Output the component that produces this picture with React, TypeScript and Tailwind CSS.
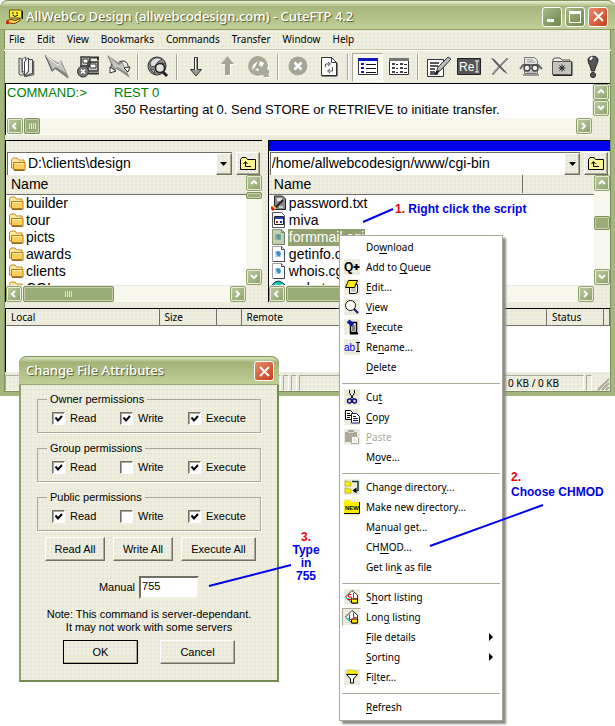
import React, { useState } from 'react';
import clsx from 'clsx';

const FACE = 'bg-[#eeeedb] bg-[radial-gradient(#e4e4e2_1px,transparent_1px)] bg-[size:4px_4px]';
const RAISED = 'border border-t-white border-l-white border-r-[#716f64] border-b-[#716f64] shadow-[inset_-1px_-1px_0_#aca899]';
const SUNKEN = 'border border-t-[#aca899] border-l-[#aca899] border-r-white border-b-white';
const UI_TEXT = "font-['Noto_Sans',sans-serif] text-[10px] text-black";

interface ToolItem {
  label: string;
  icon: React.ReactNode;
  pressed?: boolean;
  disabled?: boolean;
}

interface MenuEntry {
  label: string;
  hot?: number;
  icon?: React.ReactNode;
  disabled?: boolean;
  checked?: boolean;
  submenu?: boolean;
}

/* ---------- icons ---------- */

const Svg = ({ w = 24, h = 24, children }: { w?: number; h?: number; children: React.ReactNode }) => (
  <svg width={w} height={h} viewBox={`0 0 ${w} ${h}`} fill="none" aria-hidden="true" className="shrink-0">
    {children}
  </svg>
);

const FolderIcon = () => (
  <Svg w={16} h={16}>
    <path d="M1.500 12V3.500L3 2h4l1.500 2H14v8z" fill="#fbe9a0" stroke="#c8891c" />
    <path d="M3.500 13.500V6.500h11.500v6L14 13.500z" fill="#fbcf5c" stroke="#b97a12" />
    <path d="M4.500 7.500h9.500" stroke="#fff3bd" />
    <path d="M4 14.500h10.500l1-1.500" stroke="#8a6a2a" />
  </Svg>
);

const UpFolderIcon = () => (
  <Svg w={16} h={14}>
    <path d="M.5 12.500V2.500L2 .5h4l1.500 2h8v10z" fill="#fbf58e" stroke="#000" />
    <path d="M5.500 5v4.500H11M3.500 7l2-2.500 2 2.500" stroke="#000" />
  </Svg>
);

const PasswordFile = () => (
  <Svg w={16} h={16}>
    <path d="M3.500 1h8l3 3v10.500h-11z" fill="#8c8c8c" stroke="#222" />
    <path d="M6 3h5v3H6z" fill="#e4e4e4" />
    <path d="M4 13l8-8" stroke="#222" strokeWidth="2" />
    <path d="M8 11h4v2H8z" fill="#ccc" />
    <path d="M0 12l3 3" stroke="#d01818" strokeWidth="3" />
    <path d="M2 11l3 3" stroke="#f0c020" strokeWidth="2" />
  </Svg>
);

const MivaFile = () => (
  <Svg w={16} h={16}>
    <path d="M1.500.5h9l3 3v12h-12z" fill="#fff" stroke="#555" />
    <path d="M3.500 4.500h9v8h-9z" fill="#fff" stroke="#222" />
    <path d="M4 5h8v2H4z" fill="#2a3cc0" />
    <path d="M5 9h2v2H5z" fill="#c02020" />
    <path d="M9 9h2v2H9z" fill="#2030b0" />
  </Svg>
);

const ScriptFile = ({ selected }: { selected?: boolean }) => (
  <Svg w={16} h={16}>
    <path d="M1.500.5h9l3 3v12h-12z" fill={selected ? '#c3d0b0' : '#fff'} stroke={selected ? '#8b9a74' : '#9aa0a8'} />
    <path d="M13.500 4v11.500h-11M10.500.5v3h3" stroke={selected ? '#6c7c56' : '#3c4450'} />
    <path d="M4 5h6v6H4z" fill={selected ? '#86b59a' : '#b9dcf2'} />
    <path d="M5 6l3-1 2 3-2 3-2-2z" fill={selected ? '#5f96a0' : '#2f8fd0'} />
  </Svg>
);

const GemFile = () => (
  <Svg w={16} h={16}>
    <path d="M1 5l3-3 4-1 4 2 3 3-7 8z" fill="#18b8b0" stroke="#0b3c48" />
    <path d="M4 4l4 2 4-2" stroke="#7ff" />
  </Svg>
);

const CrossGlyph = () => (
  <Svg w={13} h={13}>
    <path d="M2 2l9 9M11 2l-9 9" stroke="#fff" strokeWidth="2" />
  </Svg>
);

const AppLogo = () => (
  <Svg w={18} h={16}>
    <path d="M3.500 1h12v8h-12z" fill="#ffee38" stroke="#6b5300" />
    <path d="M16.500 2v8" stroke="#111" />
    <path d="M7 3v2M11 3v2M6.500 6l2.500 1.500L12 6" stroke="#111" />
    <path d="M1 11.500l4-1 4 1 5-2v2l-5 3-7-.5z" fill="#ffd83a" stroke="#6b3b00" />
    <path d="M0 12h3v3H0z" fill="#d42a10" />
  </Svg>
);

const BookIcon = () => (
  <Svg>
    <path d="M5 3l3 1v13l3 3H6l-1-1z" fill="#d8d8d2" stroke="#555" />
    <path d="M8.500 4l3-2v14l-3 1z" fill="#fff" stroke="#666" />
    <path d="M10.500 7l3-4h1v13l-4 5z" fill="#fff" stroke="#444" />
    <path d="M14.500 4.500h4v14l-4 1-4 2 4-5z" fill="#e8e8e2" stroke="#444" />
    <path d="M19.500 6v13.500l-8 2" stroke="#666" strokeWidth="1.500" />
  </Svg>
);

const BoltIcon = () => (
  <Svg>
    <path d="M0 0l13 8 3-3 8 18-14-9-3 3z" fill="#8a8a82" />
    <path d="M2 2l11 8 3-3 5 11-10-6-3 3z" fill="#c4c4bc" />
    <path d="M0 0l7 16 3-3 13 10" stroke="#666" />
    <path d="M1 1l12 9 3-4" stroke="#fff" />
  </Svg>
);

const StopConnectIcon = () => (
  <Svg>
    <path d="M5 2h9v9H5zM12 7h10v9H12z" fill="#c9c9c2" stroke="#333" strokeWidth="1.500" />
    <path d="M7 4h5v4H7zM14 9h6v4h-6z" fill="#fff" stroke="#333" />
    <path d="M12 18.500h11M15 2.500h7v3" stroke="#333" strokeWidth="2" />
    <circle cx="7" cy="16.500" r="5.500" fill="#777" stroke="#333" />
    <path d="M5 14.500l4 4M9 14.500l-4 4" stroke="#fff" strokeWidth="1.500" />
  </Svg>
);

const ReconnectIcon = () => (
  <Svg>
    <path d="M0 0l12 8 3-2 8 17-13-9-3 2z" fill="#8a8a82" />
    <path d="M2 2l10 8 3-2 5 10-10-6-2 2z" fill="#c4c4bc" />
    <path d="M12 7c6-3 10 1 9 7M5 9c-2 2-1 6 3 8" stroke="#333" />
    <path d="M23 12l-2 5-4-4zM3 18v-6l6 4z" fill="#fff" stroke="#333" />
  </Svg>
);

const GlobeFindIcon = () => (
  <Svg>
    <circle cx="11" cy="11" r="9" fill="#8a8a86" stroke="#333" />
    <path d="M4 8c3-6 8-6 12-4l-4 3-3 4-4 1zM4 14l4 1 1 4zM15 8l4 1v4z" fill="#ddd" stroke="#444" />
    <circle cx="14" cy="13" r="4.500" fill="#fff" fillOpacity=".75" stroke="#222" strokeWidth="1.500" />
    <path d="M17 17l4 4" stroke="#222" strokeWidth="3" />
  </Svg>
);

const DownIcon = () => (
  <Svg>
    <path d="M9.500 2.500h3v12h4l-5.500 6.500-5.500-6.500h4z" fill="#999" stroke="#333" />
    <path d="M10.500 3v12" stroke="#fff" />
  </Svg>
);

const UpIcon = () => (
  <Svg>
    <path d="M10 21h5V10h4l-6.500-8L6 10h4z" fill="#fff" />
    <path d="M9 20h5V9h4l-6.500-8L5 9h4z" fill="#a5a595" />
  </Svg>
);

const QueueIcon = () => (
  <Svg w={26}>
    <circle cx="13" cy="12" r="10" fill="#fff" />
    <circle cx="12" cy="11" r="10" fill="#a9a99a" />
    <path d="M14 15h9v7h-5z" fill="#a9a99a" />
    <path d="M6 15l1-5 5-4-3 6zM14 6l4 2-2 4-3-2zM9 15l3-2 1 3z" fill="#fff" />
    <path d="M19 22.500h5M22 20l2-2" stroke="#fff" />
  </Svg>
);

const AbortIcon = () => (
  <Svg>
    <circle cx="13" cy="12" r="9" fill="#fff" />
    <circle cx="12" cy="11" r="9.500" fill="#a5a595" />
    <path d="M8.500 7.500l7 7M15.500 7.500l-7 7" stroke="#fff" strokeWidth="2.500" />
  </Svg>
);

const RefreshPageIcon = () => (
  <Svg>
    <path d="M4.500 2.500h10l5 5v13h-15z" fill="#fff" stroke="#333" />
    <path d="M20 8v13H5" stroke="#222" />
    <path d="M14.500 2.500v5h5" stroke="#333" />
    <path d="M8.500 12V9h4M11 7l2.500 2L11 11M15.500 12v4h-4M13 14l-2.500 2 2.500 2" stroke="#555" />
  </Svg>
);

const ListViewIcon = ({ blue }: { blue?: boolean }) => (
  <Svg w={22}>
    <path d="M1.500 4h19v15.500h-19z" fill="#fff" stroke="#333" />
    <path d="M1 3h20v3H1z" fill={blue ? '#1018b8' : '#777'} />
    {[9, 13, 17].map((y) => (
      <g key={y}>
        <path d={`M4 ${y}h3`} stroke={blue ? '#1018b8' : '#444'} strokeWidth="2" />
        {blue ? (
          <path d={`M9 ${y + 0.5}h10`} stroke="#111" />
        ) : (
          <>
            <path d={`M8 ${y + 0.5}h2M16 ${y + 0.5}h3`} stroke="#222" />
            <path d={`M12 ${y}h3`} stroke="#444" strokeWidth="2" />
          </>
        )}
      </g>
    ))}
  </Svg>
);

const EditIcon = () => (
  <Svg w={26}>
    <path d="M2.500 4.500h16v17h-16z" fill="#fff" stroke="#333" />
    <path d="M5 8h9M5 11h8M5 14h5M5 17h5M5 19h8" stroke="#222" strokeWidth="1.500" />
    <path d="M11 18l2-6L23 2l3 2-10 11z" fill="#bbb" stroke="#333" />
    <path d="M10 19l4-3" stroke="#111" strokeWidth="2" />
  </Svg>
);

const RenameTool = () => (
  <svg width="24" height="18" viewBox="0 0 24 18" aria-hidden="true">
    <path d="M.5.5h23v16H.5z" fill="#555" stroke="#222" />
    <text x="2" y="13" fontSize="12" fill="#fff" fontFamily="Liberation Sans, sans-serif">Re</text>
    <path d="M18 3h4M18 14h4M20 3v11" stroke="#fff" />
  </svg>
);

const DeleteIcon = () => (
  <Svg>
    <path d="M20 4l-8 8-7 8-1-1 7-8 8-8z" fill="#999" stroke="#555" strokeWidth=".5" />
    <path d="M3 3l3 1 14 15-4-2L8 9z" fill="#555" />
  </Svg>
);

const InspectIcon = () => (
  <Svg w={26}>
    <path d="M6.500 2.500h10l3 3v13h-13z" fill="#e4e4e0" stroke="#777" />
    <path d="M9 5h6M9 7h8M8 17h10" stroke="#999" />
    <path d="M2 14l3-4h15l4 4" stroke="#666" strokeWidth="2" />
    <circle cx="9" cy="13" r="3" fill="#eee" stroke="#444" strokeWidth="1.500" />
    <circle cx="17" cy="13" r="3" fill="#eee" stroke="#444" strokeWidth="1.500" />
    <path d="M5 20h16" stroke="#999" strokeWidth="2" />
  </Svg>
);

const NewFolderTool = () => (
  <Svg>
    <path d="M3 7V4l2-1h5l2 2h8v2z" fill="#eee" stroke="#555" />
    <path d="M2.500 6.500h19v13h-19z" fill="#c4c4bd" stroke="#555" />
    <path d="M3 20.500h19V7" stroke="#222" />
    <path d="M12 9.500v7M8.500 13h7M9.500 10.500l5 5M14.500 10.500l-5 5" stroke="#222" />
  </Svg>
);

const AlertIcon = () => (
  <Svg>
    <path d="M7 5c0-5 10-5 10 0 0 3-3 7-3.500 11h-3C10 12 7 8 7 5z" fill="#555" stroke="#222" />
    <path d="M9.500 5c0-2 1-2 2-3" stroke="#eee" strokeWidth="2" />
    <circle cx="12" cy="20" r="2.500" fill="#555" stroke="#222" />
  </Svg>
);

const QueuePlus = () => (
  <Svg w={16} h={16}>
    <text x="0" y="12" fontSize="12" fontWeight="bold" fill="#000" fontFamily="Liberation Sans, sans-serif">Q</text>
    <path d="M9.500 8h6M12.500 5v6" stroke="#000" strokeWidth="2" />
  </Svg>
);

const EditSmall = () => (
  <Svg w={16} h={16}>
    <path d="M5.500 5.500h8v8l-2 1h-6z" fill="#fff" stroke="#000" />
    <path d="M7 8h5M7 10h5M7 12h5" stroke="#888" />
    <path d="M1.500 8.500l3-7h9l-3 7z" fill="#ffee00" stroke="#000" />
  </Svg>
);

const ViewSmall = () => (
  <Svg w={16} h={16}>
    <circle cx="6.500" cy="6.500" r="5" fill="#fdfdf6" stroke="#111" />
    <path d="M10 10l4 4" stroke="#101070" strokeWidth="2" />
  </Svg>
);

const ExecuteSmall = () => (
  <Svg w={16} h={16}>
    <path d="M6.500 3.500h6v10h-6z" fill="#fff" stroke="#000" strokeWidth="1.500" />
    <path d="M8 7h3M8 9h3M8 11h3" stroke="#000" />
    <path d="M4 2l5 4" stroke="#1018a0" strokeWidth="4" />
    <path d="M6 14.500h8" stroke="#000" strokeWidth="2" />
  </Svg>
);

const RenameSmall = () => (
  <Svg w={16} h={16}>
    <text x="0" y="12" fontSize="10" fill="#0000e0" fontFamily="Liberation Sans, sans-serif">ab</text>
    <path d="M12 3.500h4M12 12.500h4M14 4v8" stroke="#000" />
  </Svg>
);

const CutSmall = () => (
  <Svg w={16} h={16}>
    <path d="M5.500 1v3l4 6M10.500 1v3l-4 6" stroke="#000" />
    <circle cx="5.500" cy="12" r="2" stroke="#101080" strokeWidth="1.500" />
    <circle cx="10.500" cy="12" r="2" stroke="#101080" strokeWidth="1.500" />
  </Svg>
);

const CopySmall = () => (
  <Svg w={16} h={16}>
    <path d="M1.500 1.500h5l2 2v7h-7z" fill="#fff" stroke="#000" />
    <path d="M3 4.500h3M3 6.500h4M3 8.500h3" stroke="#000" />
    <path d="M7.500 4.500h5l3 3v6.500h-8z" fill="#fff" stroke="#101070" />
    <path d="M9 7.500h3M9 9.500h5M9 11.500h5" stroke="#101070" />
  </Svg>
);

const PasteSmall = () => (
  <Svg w={16} h={16}>
    <path d="M1 3h3V1h6v2h3v10H1z" fill="#aca899" />
    <path d="M7.500 7.500h5l2 2v5h-7z" fill="#fff" stroke="#aca899" />
    <path d="M9 10h3M9 12h4M4 3.500h6" stroke="#d8d6c8" />
  </Svg>
);

const ChangeDirSmall = () => (
  <Svg w={16} h={16}>
    <path d="M1 2h2l1 1h3v4H1zM1 9h2l1 1h3v4H1z" fill="#f8f000" stroke="#8a8400" strokeWidth=".5" />
    <path d="M8 2.500h6v9h-3" stroke="#0a4030" strokeWidth="1.500" />
    <path d="M12.500 8.500v6L8.500 11.500z" fill="#000" />
  </Svg>
);

const NewDirSmall = () => (
  <Svg w={16} h={16}>
    <path d="M0 3l1-2h5l1 2h8v11H0z" fill="#ffee00" />
    <path d="M15.500 3v11.500H0" stroke="#000" />
    <text x="1" y="11" fontSize="6" fontWeight="bold" fill="#000" fontFamily="Liberation Sans, sans-serif">NEW</text>
  </Svg>
);

const ListingSmall = ({ two }: { two?: boolean }) => (
  <Svg w={16} h={16}>
    <path d="M1.500 8l6.500-6.500L13.500 6v8H8z" fill="#fff" stroke="#333" />
    <path d="M7.500 10h6v4h-6z" fill="#ffee00" stroke="#000" />
    <path d="M2 9h3v3z" fill="#20d0e0" />
    {two ? <path d="M7.500 5.500h-3v2.500h3v2.500h-4M9.500 4v5.500h3" stroke="#e01010" /> : <path d="M5.500 5.500v5H9M9.500 3.500v5h3" stroke="#e01010" />}
  </Svg>
);

const FilterSmall = () => (
  <Svg w={16} h={16}>
    <path d="M3 3l1-2h4l1 1h4v3H3z" fill="#ffee00" stroke="#b0a000" strokeWidth=".5" />
    <path d="M2.500 5.500h11L9.500 10v4h-3v-4z" fill="#fff" stroke="#000" />
  </Svg>
);

/* ---------- shared controls ---------- */

const CHEVRONS: Record<string, string> = {
  up: 'M3 7l3-3 3 3',
  down: 'M3 4l3 3 3-3',
  left: 'M7 3L4 6l3 3',
  right: 'M4 3l3 3-3 3',
};

const ScrollButton = ({ dir }: { dir: 'up' | 'down' | 'left' | 'right' }) => (
  <button
    type="button"
    aria-label={`Scroll ${dir}`}
    className="flex size-4 shrink-0 items-center justify-center rounded-[2px] border border-[#8ea36b] bg-gradient-to-br from-[#bccba0] to-[#8ca069] shadow-[inset_0_0_0_1px_#e6ecd6]"
  >
    <Svg w={12} h={12}>
      <path d={CHEVRONS[dir]} stroke="#fff" strokeWidth="2" />
    </Svg>
  </button>
);

const THUMB = 'rounded-[2px] border border-[#7d9159] bg-[#9aac77] shadow-[inset_0_0_0_1px_#c5d1ab]';

const ScrollBar = ({ vertical, thumb }: { vertical?: boolean; thumb?: string }) => (
  <div className={clsx('flex shrink-0 justify-between bg-[#f7f7ee]', vertical ? 'w-4 flex-col' : 'h-4')}>
    <div className={clsx('flex gap-px', vertical && 'flex-col')}>
      <ScrollButton dir={vertical ? 'up' : 'left'} />
      {thumb && (
        <div className={clsx(THUMB, 'flex items-center justify-center gap-px', thumb)}>
          {!vertical && [0, 1, 2, 3].map((n) => <i key={n} className="h-[6px] w-px bg-[#dfe7c8]" />)}
        </div>
      )}
    </div>
    <ScrollButton dir={vertical ? 'down' : 'right'} />
  </div>
);

const PathBar = ({ id, label, path, icon }: { id: string; label: string; path: string; icon?: React.ReactNode }) => (
  <div className="flex h-6 gap-1 pt-px pr-[2px] pl-px">
    <div className="grid flex-1 grid-cols-1 border-t border-l border-[#716f64] bg-white">
      <label htmlFor={id} className="sr-only">{label}</label>
      <select
        id={id}
        className={clsx('col-start-1 row-start-1 h-5 w-full appearance-none bg-white py-0 pr-4 text-[14px] leading-5 text-black outline-none', icon ? 'pl-5' : 'pl-px')}
      >
        <option>{path}</option>
      </select>
      {icon && <span className="pointer-events-none col-start-1 row-start-1 self-center justify-self-start pl-[2px]">{icon}</span>}
      <span className={clsx(FACE, RAISED, 'pointer-events-none col-start-1 row-start-1 flex w-4 items-center justify-center justify-self-end')}>
        <Svg w={7} h={4}>
          <path d="M0 0h7L3.500 4z" fill="#000" />
        </Svg>
      </span>
    </div>
    <button type="button" aria-label="Up one folder" className={clsx(FACE, RAISED, 'flex w-6 items-center justify-center')}>
      <UpFolderIcon />
    </button>
  </div>
);

const FileRow = ({ icon, name, selected }: { icon: React.ReactNode; name: string; selected?: boolean }) => (
  <tr>
    <td className="h-[17px] p-0 pl-[2px]">
      <span className="flex h-[17px] items-center gap-px">
        {icon}
        <span className={clsx('px-px leading-[17px]', selected && 'bg-[#93a070] text-white')}>{name}</span>
      </span>
    </td>
  </tr>
);

const PermissionGroup = ({ title, initial }: { title: string; initial: [boolean, boolean, boolean] }) => {
  const [values, setValues] = useState(initial);
  const toggle = (i: number) =>
    setValues((prev) => prev.map((v, n) => (n === i ? !v : v)) as [boolean, boolean, boolean]);

  return (
    <fieldset className="h-[41px] min-w-0 border border-[#aca899] px-[14px] shadow-[1px_1px_0_#fff]">
      <legend className={clsx(FACE, '-ml-[5px] px-[3px] leading-[14px]')}>{title}</legend>
      <div className="flex pt-[6px]">
        {['Read', 'Write', 'Execute'].map((name, i) => (
          <label key={name} className="flex h-[13px] w-[68px] shrink-0 items-center gap-[5px] whitespace-nowrap last:w-auto">
            <span className="grid">
              <input
                type="checkbox"
                checked={values[i]}
                onChange={() => toggle(i)}
                className="peer col-start-1 row-start-1 size-[13px] appearance-none border border-t-[#716f64] border-r-white border-b-white border-l-[#716f64] bg-white shadow-[inset_1px_1px_0_#aca899]"
              />
              <svg viewBox="0 0 13 13" className="pointer-events-none invisible col-start-1 row-start-1 size-[13px] peer-checked:visible" aria-hidden="true">
                <path d="M3.500 5.500L6 8.500 10 4" fill="none" stroke="#000" strokeWidth="2" />
              </svg>
            </span>
            {name}
          </label>
        ))}
      </div>
    </fieldset>
  );
};

const PushButton = ({ children, wide, primary }: { children: React.ReactNode; wide?: boolean; primary?: boolean }) => (
  <button
    type="button"
    className={clsx(FACE, RAISED, 'h-6', wide ? 'w-[75px]' : 'w-[60px]', primary && 'outline outline-1 -outline-offset-1 outline-black')}
  >
    {children}
  </button>
);

/* ---------- data ---------- */

const MENUS = ['File', 'Edit', 'View', 'Bookmarks', 'Commands', 'Transfer', 'Window', 'Help'];

const TOOLS: ToolItem[][] = [
  [
    { label: 'Site manager', icon: <BookIcon /> },
    { label: 'Quick connect', icon: <BoltIcon /> },
    { label: 'Disconnect', icon: <StopConnectIcon /> },
    { label: 'Reconnect', icon: <ReconnectIcon /> },
  ],
  [{ label: 'Search', icon: <GlobeFindIcon /> }],
  [
    { label: 'Download', icon: <DownIcon /> },
    { label: 'Upload', icon: <UpIcon />, disabled: true },
    { label: 'Queue', icon: <QueueIcon />, disabled: true },
  ],
  [
    { label: 'Stop', icon: <AbortIcon />, disabled: true },
    { label: 'Refresh', icon: <RefreshPageIcon /> },
  ],
  [
    { label: 'Long list', icon: <ListViewIcon blue />, pressed: true },
    { label: 'Short list', icon: <ListViewIcon /> },
  ],
  [
    { label: 'Edit', icon: <EditIcon /> },
    { label: 'Rename', icon: <RenameTool /> },
    { label: 'Delete', icon: <DeleteIcon /> },
    { label: 'View', icon: <InspectIcon /> },
    { label: 'New folder', icon: <NewFolderTool /> },
    { label: 'Execute', icon: <AlertIcon /> },
  ],
];

const CONTEXT_MENU: MenuEntry[][] = [
  [
    { label: 'Download', hot: 2 },
    { label: 'Add to Queue', hot: 7, icon: <QueuePlus /> },
    { label: 'Edit...', hot: 0, icon: <EditSmall /> },
    { label: 'View', hot: 0, icon: <ViewSmall /> },
    { label: 'Execute', hot: 1, icon: <ExecuteSmall /> },
    { label: 'Rename...', hot: 2, icon: <RenameSmall /> },
    { label: 'Delete', hot: 0 },
  ],
  [
    { label: 'Cut', hot: 2, icon: <CutSmall /> },
    { label: 'Copy', hot: 0, icon: <CopySmall /> },
    { label: 'Paste', hot: 0, icon: <PasteSmall />, disabled: true },
    { label: 'Move...', hot: 1 },
  ],
  [
    { label: 'Change directory...', hot: 15, icon: <ChangeDirSmall /> },
    { label: 'Make new directory...', hot: 10, icon: <NewDirSmall /> },
    { label: 'Manual get...', hot: 1 },
    { label: 'CHMOD...', hot: 2 },
    { label: 'Get link as file', hot: 7 },
  ],
  [
    { label: 'Short listing', hot: 1, icon: <ListingSmall two /> },
    { label: 'Long listing', hot: 3, icon: <ListingSmall />, checked: true },
    { label: 'File details', hot: 0, submenu: true },
    { label: 'Sorting', hot: 0, submenu: true },
    { label: 'Filter...', hot: 2, icon: <FilterSmall /> },
  ],
  [{ label: 'Refresh', hot: 0 }],
];

const HotLabel = ({ label, hot }: { label: string; hot?: number }) =>
  hot === undefined ? (
    <span>{label}</span>
  ) : (
    <span>
      {label.slice(0, hot)}
      <u className="underline-offset-2">{label[hot]}</u>
      {label.slice(hot + 1)}
    </span>
  );

/* ---------- main window ---------- */

const FtpWindow = () => (
  <main className={clsx(FACE, 'rounded-t-lg border-4 border-t-0 border-[#a3b67d] shadow-[inset_0_0_0_1px_#7c9058]')}>
    <header className="-mx-1 flex h-[30px] items-center gap-[2px] rounded-t-lg border-t border-b border-t-[#7f9160] border-b-[#8c9e66] bg-gradient-to-b from-[#eef3d6] via-[#a6b67c] via-20% to-[#c0cf96] pt-[3px] pr-[7px] pl-[6px]">
      <AppLogo />
      <h1 className="flex-1 whitespace-nowrap font-['Noto_Sans',sans-serif] text-[13px] font-medium text-white [text-shadow:1px_1px_1px_#4a5730]">
        AllWebCo Design (allwebcodesign.com) - CuteFTP 4.2
      </h1>
      <div className="flex gap-[3px]">
        <button type="button" aria-label="Minimize" className="flex size-5 items-end rounded-[3px] border border-white bg-gradient-to-br from-[#a9b98a] to-[#6f8648] p-1">
          <i className="h-[3px] w-[7px] bg-white" />
        </button>
        <button type="button" aria-label="Maximize" className="size-5 rounded-[3px] border border-white bg-gradient-to-br from-[#a9b98a] to-[#6f8648] p-[3px]">
          <i className="block h-full border border-t-[3px] border-white" />
        </button>
        <button type="button" aria-label="Close" className="flex size-5 items-center justify-center rounded-[3px] border border-white bg-gradient-to-br from-[#e88a6a] to-[#c43c18]">
          <CrossGlyph />
        </button>
      </div>
    </header>

    <nav className={clsx(UI_TEXT, 'flex h-5 items-center gap-3 border-b border-[#c9c7b4] pl-[5px]')}>
      {MENUS.map((name) => (
        <button key={name} type="button">{name}</button>
      ))}
    </nav>

    <div role="toolbar" aria-label="Main toolbar" className="flex h-[33px] items-center border-t border-white pl-[6px]">
      {TOOLS.map((group, g) => (
        <React.Fragment key={g}>
          {g > 0 && (
            <span className="flex w-2 shrink-0 justify-center">
              <i className="h-[26px] w-[2px] border-r border-l border-r-white border-l-[#aca899]" />
            </span>
          )}
          {group.map((tool) => (
            <button
              key={tool.label}
              type="button"
              aria-label={tool.label}
              disabled={tool.disabled}
              className={clsx('flex h-[29px] w-[31px] shrink-0 items-center justify-center', tool.pressed && [SUNKEN, 'bg-[#f8f8f0]'])}
            >
              {tool.icon}
            </button>
          ))}
        </React.Fragment>
      ))}
    </div>

    {/* session log */}
    <section aria-label="Session log" className="mx-px flex h-[52px] border-t border-l border-black">
      <div className="flex flex-1 flex-col bg-white pl-px">
        <dl className="grid h-[34px] grid-cols-[107px_1fr] text-[13px] leading-[17px] whitespace-nowrap">
          <dt className="text-[#008000]">COMMAND:&gt;</dt>
          <dd className="text-[#008000]">REST 0</dd>
          <dd className="col-start-2 text-black">350 Restarting at 0. Send STORE or RETRIEVE to initiate transfer.</dd>
        </dl>
        <ScrollBar thumb="w-4" />
      </div>
      <div className="flex h-[34px] w-[18px] flex-col pl-px">
        <ScrollBar vertical />
      </div>
    </section>

    {/* file panes */}
    <div className="mx-px mt-[5px] flex gap-[6px] text-[14px] text-black">
      <section aria-label="Local files" className="min-w-0 grow-[3] basis-0 border-t border-l border-black">
        <div className="h-[10px]" />
        <PathBar id="local-path" label="Local folder" path="D:\clients\design" icon={<FolderIcon />} />
        <div className="flex h-[111px] pb-px">
          <div className="flex-1 overflow-hidden bg-white">
            <table className="w-full border-collapse">
              <thead>
                <tr>
                  <th className={clsx(FACE, 'h-[19px] border-b border-[#716f64] p-0 pl-[5px] text-left leading-[18px] font-normal')}>Name</th>
                </tr>
              </thead>
              <tbody>
                {['builder', 'tour', 'picts', 'awards', 'clients', 'CGI'].map((name) => (
                  <FileRow key={name} icon={<FolderIcon />} name={name} />
                ))}
              </tbody>
            </table>
          </div>
          <ScrollBar vertical thumb="h-[7px]" />
        </div>
        <div className="pr-4">
          <ScrollBar thumb="w-[91px]" />
        </div>
      </section>

      <section aria-label="Remote files" className="min-w-0 grow-[4] basis-0 border-t border-l border-black">
        <div className="h-[10px] bg-[#0000f0]" />
        <PathBar id="remote-path" label="Remote folder" path="/home/allwebcodesign/www/cgi-bin" />
        <div className="flex h-[111px] pb-px">
          <div className="flex-1 overflow-hidden bg-white">
            <table className="w-full border-collapse">
              <thead>
                <tr>
                  <th className={clsx(FACE, 'h-[19px] w-full border-b border-[#716f64] p-0 pl-[5px] text-left leading-[18px] font-normal')}>
                    <span className="mr-[71px] block border-r border-[#716f64]">Name</span>
                  </th>
                </tr>
              </thead>
              <tbody>
                <FileRow icon={<PasswordFile />} name="password.txt" />
                <FileRow icon={<MivaFile />} name="miva" />
                <FileRow icon={<ScriptFile selected />} name="formmail.cgi" selected />
                <FileRow icon={<ScriptFile />} name="getinfo.cgi" />
                <FileRow icon={<ScriptFile />} name="whois.cgi" />
                <FileRow icon={<GemFile />} name="webster" />
              </tbody>
            </table>
          </div>
          <ScrollBar vertical thumb="mt-6 h-[14px]" />
        </div>
        <div className="pr-4">
          <ScrollBar thumb="w-[150px]" />
        </div>
      </section>
    </div>

    {/* transfer queue */}
    <div className="mx-px mt-[6px] h-[64px] border-t border-l border-black bg-white">
      <table className={clsx(UI_TEXT, 'w-full table-fixed border-collapse')}>
        <thead>
          <tr>
            {[
              ['Local', 'w-[153px]'],
              ['Size', 'w-[57px]'],
              ['', 'w-[25px]'],
              ['Remote', ''],
              ['Status', 'w-[57px]'],
              ['', 'w-[6px]'],
            ].map(([name, width], i) => (
              <th key={i} className={clsx(FACE, width, 'h-4 border-r border-b border-[#716f64] p-0 pl-[5px] text-left leading-4 font-normal')}>
                {name}
              </th>
            ))}
          </tr>
        </thead>
      </table>
    </div>

    <footer className={clsx(UI_TEXT, 'mx-px flex h-5 gap-[2px] pt-[3px] pb-px')}>
      <div className={clsx(SUNKEN, 'w-[276px]')} />
      <div className={clsx(SUNKEN, 'w-[6px]')} />
      <div className={clsx(SUNKEN, 'w-[6px]')} />
      <div className={clsx(SUNKEN, 'flex-1 pr-6 text-right leading-[14px]')}>0 KB / 0 KB</div>
      <div className={clsx(SUNKEN, 'w-[6px]')} />
      <Svg w={16} h={16}>
        <path d="M4 15L15 4M8 15l7-7M12 15l3-3" stroke="#aca899" strokeWidth="2" />
      </Svg>
    </footer>
  </main>
);

const AttributesDialog = () => {
  const [mode, setMode] = useState('755');

  return (
    <section
      role="dialog"
      aria-label="Change File Attributes"
      className={clsx(FACE, 'absolute top-[356px] left-[19px] w-[260px] rounded-t-lg border-2 border-t-0 border-[#8ba268] border-r-[#738a52] border-b-[#738a52] text-[11px] text-black')}
    >
      <header className="-mx-[2px] flex h-[29px] items-center justify-between rounded-t-lg border-t border-b border-t-[#7f9160] border-b-[#98a974] bg-gradient-to-b from-[#dfe8c0] via-[#a3b378] via-20% to-[#c0cf96] pt-px pr-[5px] pl-[7px]">
        <h2 className="font-['Noto_Sans',sans-serif] text-[13px] font-medium text-white [text-shadow:1px_1px_1px_#4a5730]">Change File Attributes</h2>
        <button type="button" aria-label="Close dialog" className="flex size-5 items-center justify-center rounded-[3px] border border-white bg-gradient-to-br from-[#e88a6a] to-[#c43c18]">
          <CrossGlyph />
        </button>
      </header>

      <div className="flex flex-col gap-2 px-4 pt-[7px]">
        <PermissionGroup title="Owner permissions" initial={[true, true, true]} />
        <PermissionGroup title="Group permissions" initial={[true, false, true]} />
        <PermissionGroup title="Public permissions" initial={[true, false, true]} />
      </div>

      <div className="mt-[6px] flex gap-2 pl-6">
        <PushButton>Read All</PushButton>
        <PushButton>Write All</PushButton>
        <PushButton wide>Execute All</PushButton>
      </div>

      <div className="mt-[15px] flex items-center justify-center gap-1">
        <label htmlFor="mode">Manual</label>
        <input
          id="mode"
          value={mode}
          onChange={(e) => setMode(e.target.value)}
          className="h-[23px] w-[60px] border-2 border-t-[#716f64] border-r-[#f1efe2] border-b-[#f1efe2] border-l-[#716f64] bg-white px-px pb-1 outline-none"
        />
      </div>

      <p className="mt-[9px] text-center leading-[13px] whitespace-nowrap">
        Note: This command is server-dependant.
        <br />
        It may not work with some servers
      </p>

      <div className="mt-[6px] mb-4 flex gap-[22px] pl-[42px]">
        <PushButton wide primary>OK</PushButton>
        <PushButton wide>Cancel</PushButton>
      </div>
    </section>
  );
};

const ContextMenu = () => (
  <div role="menu" className={clsx(UI_TEXT, 'absolute top-[235px] left-[339px] w-[164px] border border-[#aca899] bg-white px-[2px] pt-px pb-[3px] shadow-[3px_3px_2px_#8c8c88]')}>
    {CONTEXT_MENU.map((group, g) => (
      <React.Fragment key={g}>
        {g > 0 && <hr className="mt-[6px] mb-[3px] border-[#aca899]" />}
        {group.map((item) => (
          <button
            key={item.label}
            type="button"
            role="menuitem"
            disabled={item.disabled}
            className={clsx('flex h-5 w-full items-center gap-[5px] whitespace-nowrap text-left', item.disabled && 'text-[#aca899]')}
          >
            <span
              className={clsx(
                'flex h-[18px] w-[19px] shrink-0 items-center justify-center',
                item.checked && [SUNKEN, FACE],
              )}
            >
              {item.icon && <span className={clsx(FACE, 'flex')}>{item.icon}</span>}
            </span>
            <HotLabel label={item.label} hot={item.hot} />
            {item.submenu && (
              <span className="ml-auto pr-[7px]">
                <Svg w={4} h={8}>
                  <path d="M0 0l4 4-4 4z" fill="#000" />
                </Svg>
              </span>
            )}
          </button>
        ))}
      </React.Fragment>
    ))}
  </div>
);

/* numbered hints drawn over the desktop */
const Hints = () => (
  <div className="font-['Liberation_Sans',sans-serif] text-[12px] leading-[13px] font-bold text-[#0000e8]">
    <svg width="615" height="726" className="pointer-events-none absolute top-0 left-0" aria-hidden="true">
      <path d="M393 209l-30 13M543 505L430 546M291 565l-82 21" stroke="#0000f0" strokeWidth="2" />
    </svg>
    <p className="absolute top-[203px] left-[395px] whitespace-nowrap">
      <span className="text-red-600">1.</span> Right click the script
    </p>
    <p className="absolute top-[470px] left-[511px] leading-[15px] whitespace-nowrap">
      <span className="text-red-600">2.</span>
      <br />
      Choose CHMOD
    </p>
    <p className="absolute top-[531px] left-[292px] w-7 text-center">
      <span className="text-red-600">3.</span>
      <br />
      Type in 755
    </p>
  </div>
);

export default function App() {
  return (
    <div className="relative min-h-screen overflow-hidden bg-white font-['Liberation_Sans',sans-serif]">
      <FtpWindow />
      <AttributesDialog />
      <ContextMenu />
      <Hints />
    </div>
  );
}
